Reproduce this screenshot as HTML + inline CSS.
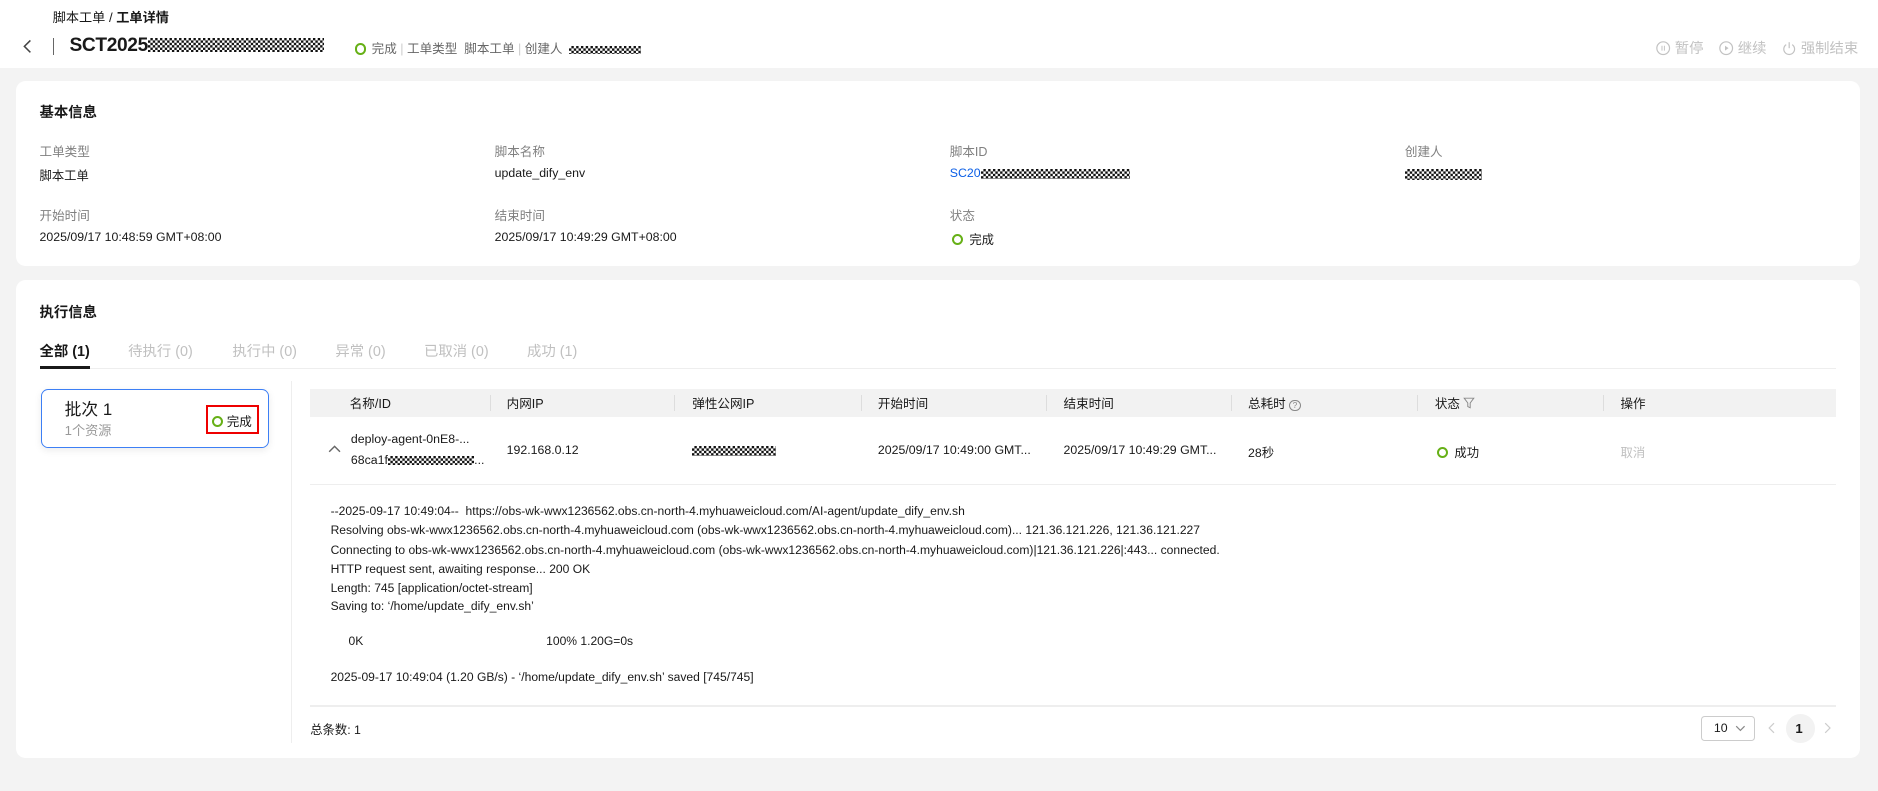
<!DOCTYPE html>
<html><head><meta charset="utf-8"><style>
html,body{margin:0;padding:0;background:#f3f3f3;}
body{width:1878px;height:791px;overflow:hidden;font-family:"Liberation Sans","Noto Sans CJK SC",sans-serif;color:#191919;}
#w{position:relative;width:1568px;height:660px;zoom:1.19770;}
.a{position:absolute;white-space:nowrap;}
.mask{display:inline-block;vertical-align:middle;background:repeating-conic-gradient(#111 0 25%,#fff 0 50%) 0 0/4px 4px;}
.card{position:absolute;background:#fff;border-radius:8px;}
.lbl{font-size:10.5px;color:#808080;}
.val{font-size:10.3px;color:#191919;}
.ring{display:inline-block;width:6px;height:6px;border:2px solid #66b016;border-radius:50%;vertical-align:-1px;margin-right:5px;}
.th{font-size:10.5px;color:#191919;top:328px;}
.dv{position:absolute;top:330px;width:1px;height:13px;background:#ddd;}
.log{font-size:10.1px;color:#191919;left:276px;}
.tab{font-size:12px;color:#c0c0c0;top:284px;}
</style></head><body><div id="w">
<div class="a" style="left:0;top:0;width:1568px;height:57px;background:#fff;"></div>
<div class="a" style="left:44px;top:6px;font-size:11px;">脚本工单 / <b style="font-weight:600">工单详情</b></div>
<svg class="a" style="left:18px;top:32px" width="10" height="14"><path d="M7 2 L2 7 L7 12" fill="none" stroke="#444" stroke-width="1.3"/></svg>
<div class="a" style="left:44px;top:32px;width:1px;height:14px;background:#666;"></div>
<div class="a" style="left:58px;top:29px;font-size:16px;font-weight:bold;letter-spacing:-0.3px">SCT2025<span class="mask" style="width:147px;height:12px;vertical-align:-1px"></span></div>
<div class="a" style="left:296px;top:32px;font-size:10.5px;color:#666;"><span class="ring"></span>完成 <span style="color:#ccc">|</span> 工单类型&nbsp; 脚本工单 <span style="color:#ccc">|</span> 创建人 &nbsp;<span class="mask" style="width:60px;height:7px"></span></div>
<div class="a" style="left:1383px;top:31px;font-size:12px;color:#c2c2c2;"><svg width="12" height="12" style="vertical-align:-2px"><circle cx="6" cy="6" r="5.3" fill="none" stroke="#c2c2c2"/><path d="M5 4v4M7 4v4" stroke="#c2c2c2" stroke-width=".8"/></svg> 暂停 &nbsp;&nbsp; <svg width="12" height="12" style="vertical-align:-2px"><circle cx="6" cy="6" r="5.3" fill="none" stroke="#c2c2c2"/><path d="M5 4l3 2-3 2z" fill="#c2c2c2"/></svg> 继续 &nbsp;&nbsp; <svg width="12" height="12" style="vertical-align:-2px"><path d="M3.5 3A4.5 4.5 0 1 0 8.5 3" fill="none" stroke="#c2c2c2"/><path d="M6 1v5" stroke="#c2c2c2"/></svg> 强制结束</div>

<div class="card" style="left:13px;top:68px;width:1540px;height:154px;"></div>
<div class="a" style="left:33px;top:84px;font-size:12px;font-weight:bold;">基本信息</div>
<div class="a lbl" style="left:33px;top:118px">工单类型</div><div class="a val" style="left:33px;top:139px">脚本工单</div>
<div class="a lbl" style="left:413px;top:118px">脚本名称</div><div class="a val" style="left:413px;top:139px">update_dify_env</div>
<div class="a lbl" style="left:793px;top:118px">脚本ID</div><div class="a val" style="left:793px;top:139px;color:#0a5ee6">SC20<span class="mask" style="width:125px;height:8px"></span></div>
<div class="a lbl" style="left:1173px;top:118px">创建人</div><div class="a val" style="left:1173px;top:139px"><span class="mask" style="width:64px;height:9px"></span></div>
<div class="a lbl" style="left:33px;top:171px">开始时间</div><div class="a val" style="left:33px;top:192px">2025/09/17 10:48:59 GMT+08:00</div>
<div class="a lbl" style="left:413px;top:171px">结束时间</div><div class="a val" style="left:413px;top:192px">2025/09/17 10:49:29 GMT+08:00</div>
<div class="a lbl" style="left:793px;top:171px">状态</div><div class="a val" style="left:795px;top:192px"><span class="ring"></span>完成</div>

<div class="card" style="left:13px;top:234px;width:1540px;height:399px;"></div>
<div class="a" style="left:33px;top:251px;font-size:12px;font-weight:bold;">执行信息</div>
<div class="a tab" style="left:33px;color:#191919;font-weight:600">全部 (1)</div>
<div class="a tab" style="left:107px">待执行 (0)</div>
<div class="a tab" style="left:194px">执行中 (0)</div>
<div class="a tab" style="left:280px">异常 (0)</div>
<div class="a tab" style="left:354px">已取消 (0)</div>
<div class="a tab" style="left:440px">成功 (1)</div>
<div class="a" style="left:33px;top:307px;width:1500px;height:1px;background:#eee;"></div>
<div class="a" style="left:33px;top:306px;width:42px;height:2px;background:#191919;"></div>

<div class="a" style="left:34px;top:325px;width:189px;height:47px;border:1px solid #3d7ff5;border-radius:6px;box-shadow:0 2px 6px rgba(0,0,0,.08);"></div>
<div class="a" style="left:54px;top:331px;font-size:14px;">批次 1</div>
<div class="a" style="left:54px;top:351px;font-size:11px;color:#999;">1个资源</div>
<div class="a" style="left:172px;top:338px;width:41px;height:21px;border:2px solid #e00;"></div>
<div class="a" style="left:177px;top:343px;font-size:10.5px;"><span class="ring" style="margin-right:3px"></span>完成</div>
<div class="a" style="left:243px;top:318px;width:1px;height:302px;background:#eee;"></div>

<div class="a" style="left:259px;top:325px;width:1274px;height:23px;background:#f2f2f2;"></div>
<div class="a th" style="left:292px">名称/ID</div><div class="dv" style="left:409px"></div>
<div class="a th" style="left:423px">内网IP</div><div class="dv" style="left:563px"></div>
<div class="a th" style="left:578px">弹性公网IP</div><div class="dv" style="left:719px"></div>
<div class="a th" style="left:733px">开始时间</div><div class="dv" style="left:873px"></div>
<div class="a th" style="left:888px">结束时间</div><div class="dv" style="left:1028px"></div>
<div class="a th" style="left:1042px">总耗时 <span style="display:inline-block;width:8px;height:8px;border:1px solid #888;border-radius:50%;font-size:7px;line-height:8px;text-align:center;color:#888;vertical-align:0">?</span></div><div class="dv" style="left:1183px"></div>
<div class="a th" style="left:1198px">状态 <svg width="10" height="10" style="vertical-align:-1px"><path d="M1 1h8L6 5v4L4 8V5z" fill="none" stroke="#888" stroke-width=".8"/></svg></div><div class="dv" style="left:1338px"></div>
<div class="a th" style="left:1353px">操作</div>

<svg class="a" style="left:274px;top:371px" width="11" height="8"><path d="M1 6.5L5.5 2 10 6.5" fill="none" stroke="#666" stroke-width="1.2"/></svg>
<div class="a val" style="left:293px;top:361px">deploy-agent-0nE8-...</div>
<div class="a val" style="left:293px;top:378px">68ca1f<span class="mask" style="width:72px;height:8px"></span>...</div>
<div class="a val" style="left:423px;top:370px">192.168.0.12</div>
<div class="a val" style="left:578px;top:370px"><span class="mask" style="width:70px;height:8px"></span></div>
<div class="a val" style="left:733px;top:370px">2025/09/17 10:49:00 GMT...</div>
<div class="a val" style="left:888px;top:370px">2025/09/17 10:49:29 GMT...</div>
<div class="a val" style="left:1042px;top:370px">28秒</div>
<div class="a val" style="left:1200px;top:370px"><span class="ring"></span>成功</div>
<div class="a val" style="left:1353px;top:370px;color:#c0c0c0">取消</div>
<div class="a" style="left:259px;top:404px;width:1274px;height:1px;background:#eee;"></div>

<div class="a log" style="top:421px">--2025-09-17 10:49:04--&nbsp; https://obs-wk-wwx1236562.obs.cn-north-4.myhuaweicloud.com/AI-agent/update_dify_env.sh</div>
<div class="a log" style="top:437px">Resolving obs-wk-wwx1236562.obs.cn-north-4.myhuaweicloud.com (obs-wk-wwx1236562.obs.cn-north-4.myhuaweicloud.com)... 121.36.121.226, 121.36.121.227</div>
<div class="a log" style="top:453px">Connecting to obs-wk-wwx1236562.obs.cn-north-4.myhuaweicloud.com (obs-wk-wwx1236562.obs.cn-north-4.myhuaweicloud.com)|121.36.121.226|:443... connected.</div>
<div class="a log" style="top:469px">HTTP request sent, awaiting response... 200 OK</div>
<div class="a log" style="top:485px">Length: 745 [application/octet-stream]</div>
<div class="a log" style="top:500px">Saving to: ‘/home/update_dify_env.sh’</div>
<div class="a log" style="top:529px;left:291px">0K</div>
<div class="a log" style="top:529px;left:456px">100% 1.20G=0s</div>
<div class="a log" style="top:559px">2025-09-17 10:49:04 (1.20 GB/s) - ‘/home/update_dify_env.sh’ saved [745/745]</div>
<div class="a" style="left:259px;top:589px;width:1274px;height:1px;background:#eee;"></div>

<div class="a val" style="left:259px;top:601px">总条数: 1</div>
<div class="a" style="left:1420px;top:598px;width:44px;height:19px;border:1px solid #ccc;border-radius:3px;"></div>
<div class="a val" style="left:1431px;top:602px">10</div>
<svg class="a" style="left:1449px;top:605px" width="9" height="6"><path d="M1 1l3.5 3.5L8 1" fill="none" stroke="#888"/></svg>
<svg class="a" style="left:1476px;top:603px" width="6" height="10"><path d="M5 1L1 5l4 4" fill="none" stroke="#ccc"/></svg>
<div class="a" style="left:1491px;top:596px;width:24px;height:24px;border-radius:50%;background:#f2f2f2;"></div>
<div class="a" style="left:1499px;top:602px;font-size:11px;font-weight:bold;">1</div>
<svg class="a" style="left:1523px;top:603px" width="6" height="10"><path d="M1 1l4 4-4 4" fill="none" stroke="#ccc"/></svg>
</div></body></html>
